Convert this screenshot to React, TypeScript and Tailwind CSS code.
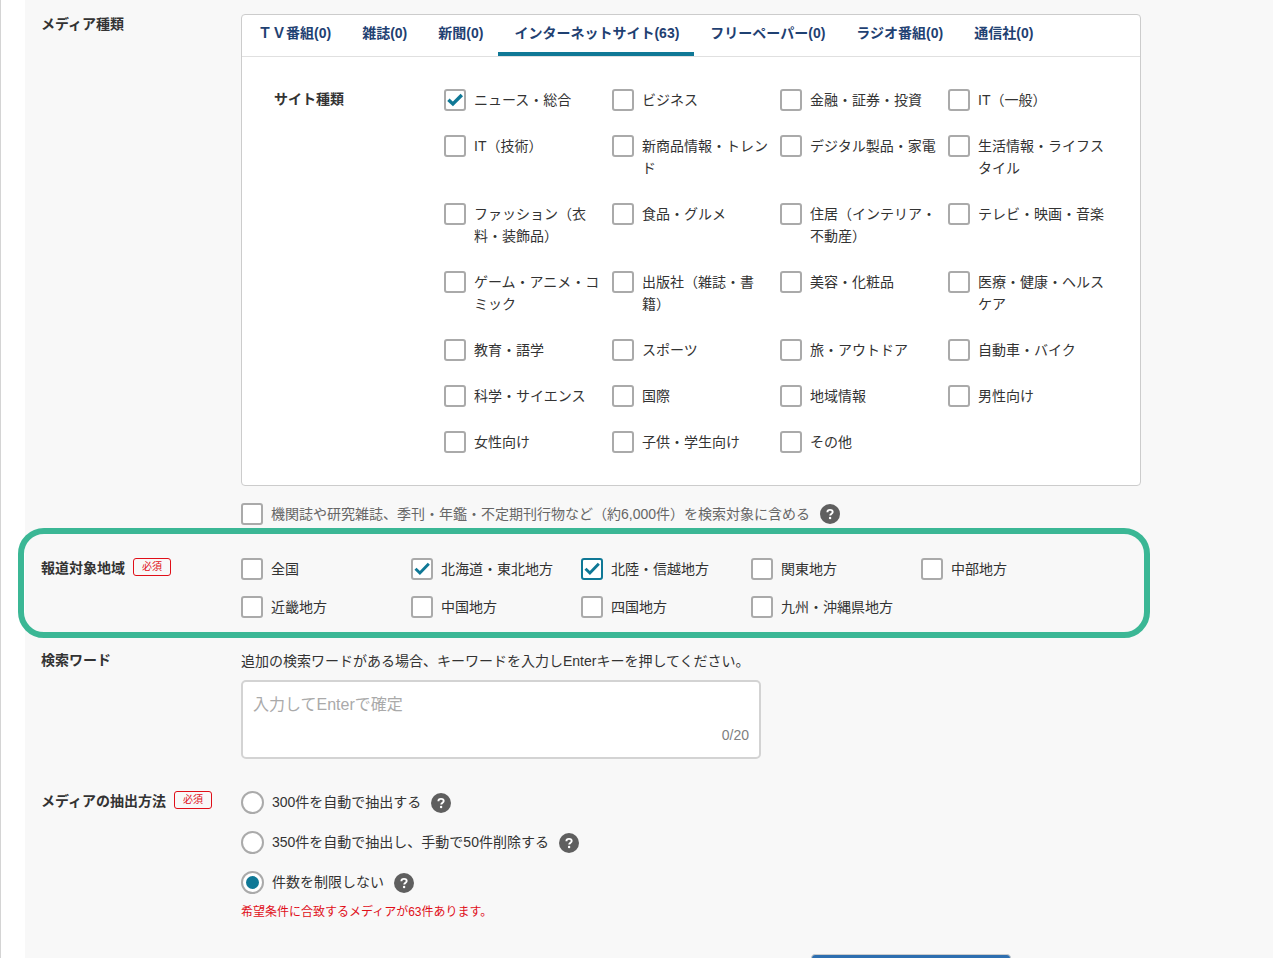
import { useState } from 'react';

interface CheckItemProps {
  label: string;
  defaultChecked?: boolean;
  accent?: boolean;
  bold?: boolean;
}

const tabs = [
  { name: 'ＴＶ番組', count: 0 },
  { name: '雑誌', count: 0 },
  { name: '新聞', count: 0 },
  { name: 'インターネットサイト', count: 63 },
  { name: 'フリーペーパー', count: 0 },
  { name: 'ラジオ番組', count: 0 },
  { name: '通信社', count: 0 },
];

const siteTypes = [
  'ニュース・総合', 'ビジネス', '金融・証券・投資', 'IT（一般）',
  'IT（技術）', '新商品情報・トレンド', 'デジタル製品・家電', '生活情報・ライフスタイル',
  'ファッション（衣料・装飾品）', '食品・グルメ', '住居（インテリア・不動産）', 'テレビ・映画・音楽',
  'ゲーム・アニメ・コミック', '出版社（雑誌・書籍）', '美容・化粧品', '医療・健康・ヘルスケア',
  '教育・語学', 'スポーツ', '旅・アウトドア', '自動車・バイク',
  '科学・サイエンス', '国際', '地域情報', '男性向け',
  '女性向け', '子供・学生向け', 'その他',
];

const regions = [
  { name: '全国', checked: false },
  { name: '北海道・東北地方', checked: true },
  { name: '北陸・信越地方', checked: true, accent: true },
  { name: '関東地方', checked: false },
  { name: '中部地方', checked: false },
  { name: '近畿地方', checked: false },
  { name: '中国地方', checked: false },
  { name: '四国地方', checked: false },
  { name: '九州・沖縄県地方', checked: false },
];

const methods = [
  { id: 'auto300', name: '300件を自動で抽出する' },
  { id: 'auto350', name: '350件を自動で抽出し、手動で50件削除する' },
  { id: 'unlimited', name: '件数を制限しない' },
];

function CheckItem({ label, defaultChecked = false, accent = false, bold = false }: CheckItemProps) {
  return (
    <label className="flex items-start gap-2 cursor-pointer">
      <span className="grid shrink-0">
        <input
          type="checkbox"
          defaultChecked={defaultChecked}
          className={`peer col-start-1 row-start-1 appearance-none w-[22px] h-[22px] bg-white border-2 rounded-[3px] cursor-pointer ${accent ? 'border-[#0f7896]' : 'border-[#aaaaaa]'}`}
        />
        <svg
          viewBox="0 0 22 22"
          className="col-start-1 row-start-1 w-[22px] h-[22px] pointer-events-none invisible peer-checked:visible"
          fill="none"
          stroke="#0f7896"
          strokeWidth={bold ? 3.4 : 2.9}
        >
          <path d={bold ? 'M4.4 10.8L8.9 15L17.8 6' : 'M4.5 10.7L8.9 15L17.8 5.7'} />
        </svg>
      </span>
      <span>{label}</span>
    </label>
  );
}

function HelpButton() {
  return (
    <button type="button" aria-label="ヘルプ" className="w-5 h-5 shrink-0 cursor-pointer">
      <svg viewBox="0 0 20 20" className="w-5 h-5" fill="none">
        <circle cx="10" cy="10" r="10" fill="#5f5f5f" />
        <path d="M7.4 8.2C7.4 6.7 8.5 5.9 10 5.9C11.6 5.9 12.7 6.7 12.7 8C12.7 9.6 10.2 9.8 10.2 11.6" stroke="#fff" strokeWidth="1.9" />
        <circle cx="10.1" cy="14" r="1.2" fill="#fff" />
      </svg>
    </button>
  );
}

function RequiredBadge() {
  return (
    <span className="h-[18px] px-2 border border-[#e00f18] rounded-[3px] text-[10px] leading-4 font-normal text-[#e00f18]">
      必須
    </span>
  );
}

export default function App() {
  const [activeTab, setActiveTab] = useState('インターネットサイト');
  const [method, setMethod] = useState('unlimited');

  return (
    <div className="min-h-screen border-l border-[#d4d4d4] bg-white pl-6 font-['Liberation_Sans','Noto_Sans_CJK_JP',sans-serif] text-sm leading-[22px] text-[#333333]">
      <form className="min-h-screen bg-[#f8f8f8] px-4 pt-[14px]">
        <div className="max-w-[1100px] flex flex-col gap-8">

          {/* Media type */}
          <section className="grid grid-cols-[200px_1fr]">
            <h2 className="font-bold leading-5">メディア種類</h2>
            <div>
              <div className="bg-white border border-[#cccccc] rounded-sm">
                <div className="flex border-b border-[#e0e0e0]">
                  {tabs.map((tab) => (
                    <button
                      key={tab.name}
                      type="button"
                      onClick={() => setActiveTab(tab.name)}
                      className={`pl-4 pr-[15px] pt-2 pb-[9px] border-b-4 leading-5 font-bold text-[#1f4172] whitespace-nowrap cursor-pointer ${activeTab === tab.name ? 'border-[#0f7896]' : 'border-transparent'}`}
                    >
                      {tab.name}({tab.count})
                    </button>
                  ))}
                </div>

                <div className="grid grid-cols-[170px_1fr] py-8 pl-8 pr-6">
                  <h3 className="font-bold leading-5">サイト種類</h3>
                  <div className="grid grid-cols-4 gap-y-6">
                    {siteTypes.map((name, i) => (
                      <div key={name} className="pr-2">
                        <CheckItem label={name} defaultChecked={i === 0} bold />
                      </div>
                    ))}
                  </div>
                </div>
              </div>

              <div className="flex items-center gap-[10px] mt-[17px] text-[#666666]">
                <CheckItem label="機関誌や研究雑誌、季刊・年鑑・不定期刊行物など（約6,000件）を検索対象に含める" />
                <HelpButton />
              </div>
            </div>
          </section>

          {/* Region */}
          <section className="relative grid grid-cols-[200px_1fr] pt-px">
            <div className="absolute -top-[29px] -bottom-5 -left-[23px] -right-[9px] border-6 border-[#3bb795] rounded-[26px] pointer-events-none" />
            <div className="flex items-start gap-2">
              <h2 className="font-bold leading-5">報道対象地域</h2>
              <RequiredBadge />
            </div>
            <div className="grid grid-cols-5 gap-y-4 max-w-[850px]">
              {regions.map((region) => (
                <CheckItem key={region.name} label={region.name} defaultChecked={region.checked} accent={region.accent} />
              ))}
            </div>
          </section>

          {/* Search words */}
          <section className="grid grid-cols-[200px_1fr]">
            <h2 className="font-bold leading-5">検索ワード</h2>
            <div>
              <label htmlFor="keyword">追加の検索ワードがある場合、キーワードを入力しEnterキーを押してください。</label>
              <div className="max-w-[520px] mt-2 px-[10px] pt-[10px] pb-[11px] bg-white border-2 border-[#d3d3d3] rounded-[5px]">
                <input
                  id="keyword"
                  type="text"
                  placeholder="入力してEnterで確定"
                  className="block w-full h-[26px] mb-1.5 text-base placeholder:text-[#aaaaaa] focus:outline-none"
                />
                <p className="text-right text-[#808080]">0/20</p>
              </div>
            </div>
          </section>

          {/* Extraction method */}
          <section className="grid grid-cols-[200px_1fr]">
            <div className="flex items-start gap-2">
              <h2 className="font-bold leading-5">メディアの抽出方法</h2>
              <RequiredBadge />
            </div>
            <div>
              <div className="flex flex-col gap-[17px]">
                {methods.map((m) => (
                  <div key={m.id} className="flex items-center gap-[10px]">
                    <label className="flex items-start gap-2 cursor-pointer">
                      <span className="grid place-items-center shrink-0">
                        <input
                          type="radio"
                          name="method"
                          checked={method === m.id}
                          onChange={() => setMethod(m.id)}
                          className="peer col-start-1 row-start-1 appearance-none w-[23px] h-[23px] bg-white border-2 border-[#aaaaaa] rounded-full cursor-pointer"
                        />
                        <span className="col-start-1 row-start-1 w-[13px] h-[13px] rounded-full bg-[#0f7896] invisible peer-checked:visible pointer-events-none" />
                      </span>
                      <span>{m.name}</span>
                    </label>
                    <HelpButton />
                  </div>
                ))}
              </div>
              <p className="mt-2 text-xs leading-5 text-[#e00f18]">希望条件に合致するメディアが63件あります。</p>
            </div>
          </section>

          <div className="flex justify-end pr-[130px]">
            <button type="submit" aria-label="次へ" className="w-[200px] h-12 bg-[#2e6fb0] border border-[#cccccc] rounded-sm cursor-pointer" />
          </div>
        </div>
      </form>
    </div>
  );
}
